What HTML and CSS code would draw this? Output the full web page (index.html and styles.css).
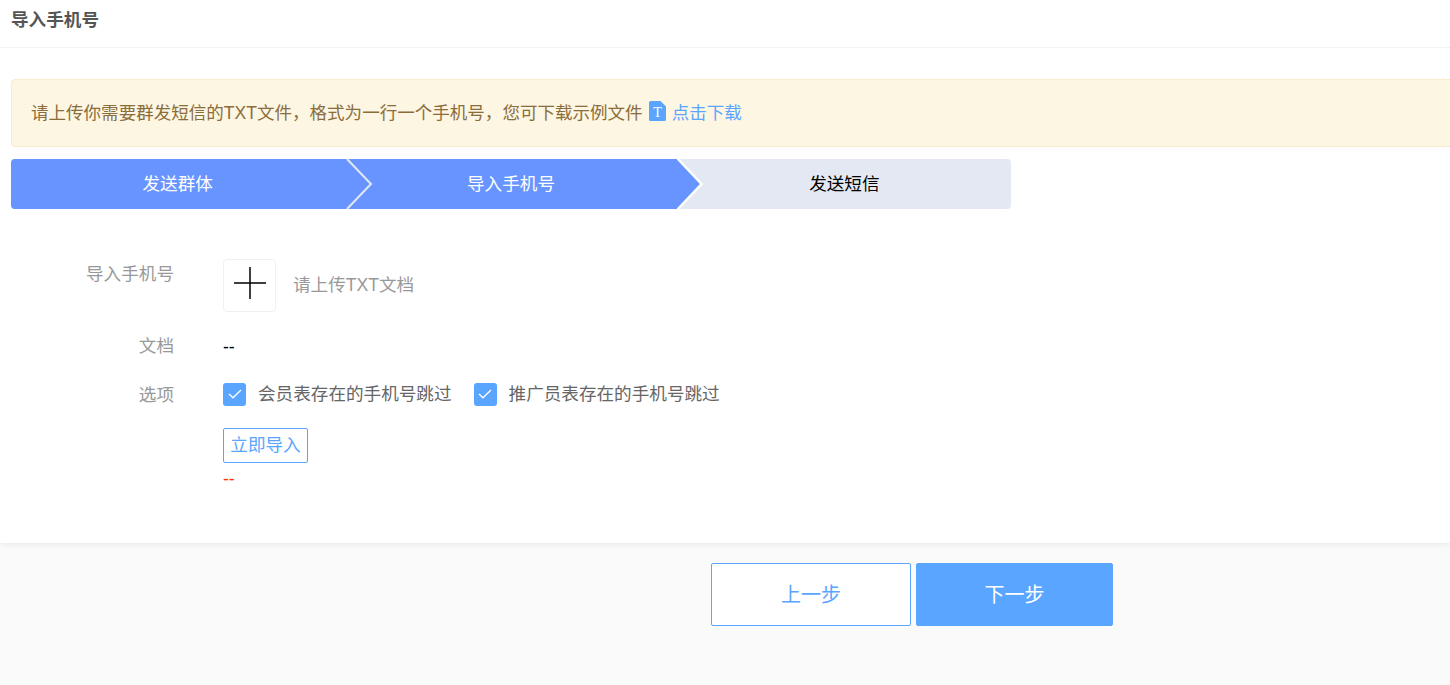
FILE: index.html
```html
<!DOCTYPE html>
<html lang="zh-CN">
<head>
<meta charset="utf-8">
<title>导入手机号</title>
<link rel="stylesheet" href="styles.css">
</head>
<body>
<main class="panel">
  <header class="panel-head">导入手机号</header>
  <div class="alert">
    <span>请上传你需要群发短信的TXT文件，格式为一行一个手机号，您可下载示例文件</span>
    <svg class="doc-icon" width="17" height="20" viewBox="0 0 17 20"><path d="M1.5 0H11.5L17 5.5V18.5A1.5 1.5 0 0 1 15.5 20H1.500A1.500 1.500 0 0 1 0 18.500V1.500A1.500 1.500 0 0 1 1.500 0Z" fill="#5aa5ff"/><text x="8.5" y="15.500" text-anchor="middle" class="doc-letter">T</text></svg>
    <a class="alert-link">点击下载</a>
  </div>
  <div class="steps">
    <div class="step step-active step-first">发送群体
      <svg class="chevron" width="28" height="50" viewBox="0 0 28 50"><path d="M1 0L25 25L1 50" fill="none" stroke="#e3e8f5" stroke-width="2"/></svg>
    </div>
    <div class="step step-active">导入手机号
      <svg class="arrow" width="30" height="50" viewBox="0 0 30 50"><path d="M0 0L24 25L0 50Z" fill="#6894ff"/><path d="M0 -1L24.500 25L0 51" fill="none" stroke="#fff" stroke-width="2.500"/></svg>
    </div>
    <div class="step">发送短信</div>
  </div>
  <form class="form">
    <div class="row row-upload">
      <label class="row-label">导入手机号</label>
      <div class="row-body">
        <span class="upload-box"><svg width="32" height="32" viewBox="0 0 32 32"><path d="M0 16H32M16 0V32" stroke="#000" stroke-width="1.500" fill="none"/></svg></span>
        <span class="upload-hint">请上传TXT文档</span>
      </div>
    </div>
    <div class="row row-doc">
      <label class="row-label">文档</label>
      <div class="row-body dash">--</div>
    </div>
    <div class="row row-options">
      <label class="row-label">选项</label>
      <div class="row-body options">
        <span class="check"><span class="check-box"><svg width="14" height="10" viewBox="0 0 14 10"><path d="M1 5L5 8.800L13 1" fill="none" stroke="#fff" stroke-width="1.300"/></svg></span><span class="check-text">会员表存在的手机号跳过</span></span>
        <span class="check"><span class="check-box"><svg width="14" height="10" viewBox="0 0 14 10"><path d="M1 5L5 8.800L13 1" fill="none" stroke="#fff" stroke-width="1.300"/></svg></span><span class="check-text">推广员表存在的手机号跳过</span></span>
      </div>
    </div>
    <div class="row-action">
      <button type="button" class="import-btn">立即导入</button>
      <div class="dash dash-red">--</div>
    </div>
  </form>
</main>
<footer class="actions">
  <button type="button" class="btn btn-prev">上一步</button>
  <button type="button" class="btn btn-next">下一步</button>
</footer>
</body>
</html>
```
FILE: styles.css
```css
* { box-sizing: border-box; }
html, body { margin: 0; height: 100%; overflow: hidden; }
body {
  background: #fafafa;
  font-family: "Liberation Sans", "Noto Sans CJK SC", sans-serif;
  font-size: 17.6px;
  color: #666;
}
.panel {
  height: 543px;
  background: #fff;
  box-shadow: 0 1px 6px rgba(0, 0, 0, 0.08);
  position: relative;
  padding-left: 11px;
  overflow: hidden;
}
.panel-head {
  height: 48px;
  margin-left: -11px;
  padding: 8px 0 0 11px;
  line-height: 24px;
  font-weight: 700;
  color: #555;
  border-bottom: 1px solid #f3f3f3;
}
.alert {
  display: flex;
  align-items: center;
  width: 1500px;
  height: 68px;
  margin-top: 31px;
  padding: 0 0 4px 19px;
  background: #fdf6e3;
  border: 1px solid #faebcc;
  border-radius: 4px;
  color: #8a6d3b;
  font-size: 17.55px;
}
.doc-icon { margin: 0 6px 0 6px; flex: none; }
.doc-letter { font: 14px "Liberation Serif", serif; fill: #fff; }
.alert-link { color: #5aa5ff; }
.steps {
  display: flex;
  width: 1000px;
  height: 50px;
  margin-top: 12px;
  background: #e4e8f2;
  border-radius: 4px;
  color: #000;
}
.step {
  position: relative;
  flex: 1;
  display: flex;
  align-items: center;
  justify-content: center;
  padding-bottom: 4px;
}
.step-active { background: #6894ff; color: #fff; }
.step-first { border-radius: 4px 0 0 4px; z-index: 1; }
.chevron { position: absolute; left: 335px; top: 0; }
.arrow { position: absolute; left: 333px; top: 0; }
.form { margin-top: 50px; }
.row { display: flex; }
.row-label { width: 163px; text-align: right; color: #999; flex: none; margin-right: 49px; }
.row-upload { height: 53px; }
.row-upload .row-label { line-height: 30px; }
.row-upload .row-body { display: flex; align-items: center; }
.upload-box {
  width: 53px;
  height: 53px;
  display: flex;
  align-items: center;
  justify-content: center;
  border: 1px solid #f0f0f0;
  border-radius: 4px;
}
.upload-box svg { margin-bottom: 6px; }
.upload-hint { margin: 0 0 4px 17px; color: #999; }
.row-doc { margin-top: 20px; line-height: 26px; }
.row-doc .row-label { margin-top: 1px; }
.dash { color: #000; }
.row-doc .dash { padding-top: 2px; }
.row-options { margin-top: 22px; line-height: 26px; }
.options { display: flex; gap: 22px; }
.check { display: flex; align-items: flex-start; color: #666; }
.check-text { margin-top: -1px; }
.check-box {
  width: 23px;
  height: 23px;
  display: flex;
  align-items: center;
  justify-content: center;
  margin: 1px 12px 0 0;
  background: #5aa5ff;
  border-radius: 3px;
}
.check-box svg { margin-bottom: 2px; }
.row-action { margin: 20px 0 0 212px; }
.import-btn {
  display: block;
  width: 85px;
  height: 35px;
  padding: 0 0 4px;
  background: #fff;
  border: 1px solid #5aa5ff;
  border-radius: 2px;
  color: #5aa5ff;
  font: inherit;
}
.dash-red { color: #f30; line-height: 24px; margin-top: 4px; }
.actions { display: flex; gap: 5px; padding: 20px 0 0 711px; }
.btn {
  height: 63px;
  border-radius: 2px;
  font: inherit;
  font-size: 20px;
  padding: 0 0 2px;
}
.btn-prev { width: 200px; background: #fff; border: 1px solid #5aa5ff; color: #5aa5ff; }
.btn-next { width: 197px; background: #5aa5ff; border: 1px solid #5aa5ff; color: #fff; }
```
